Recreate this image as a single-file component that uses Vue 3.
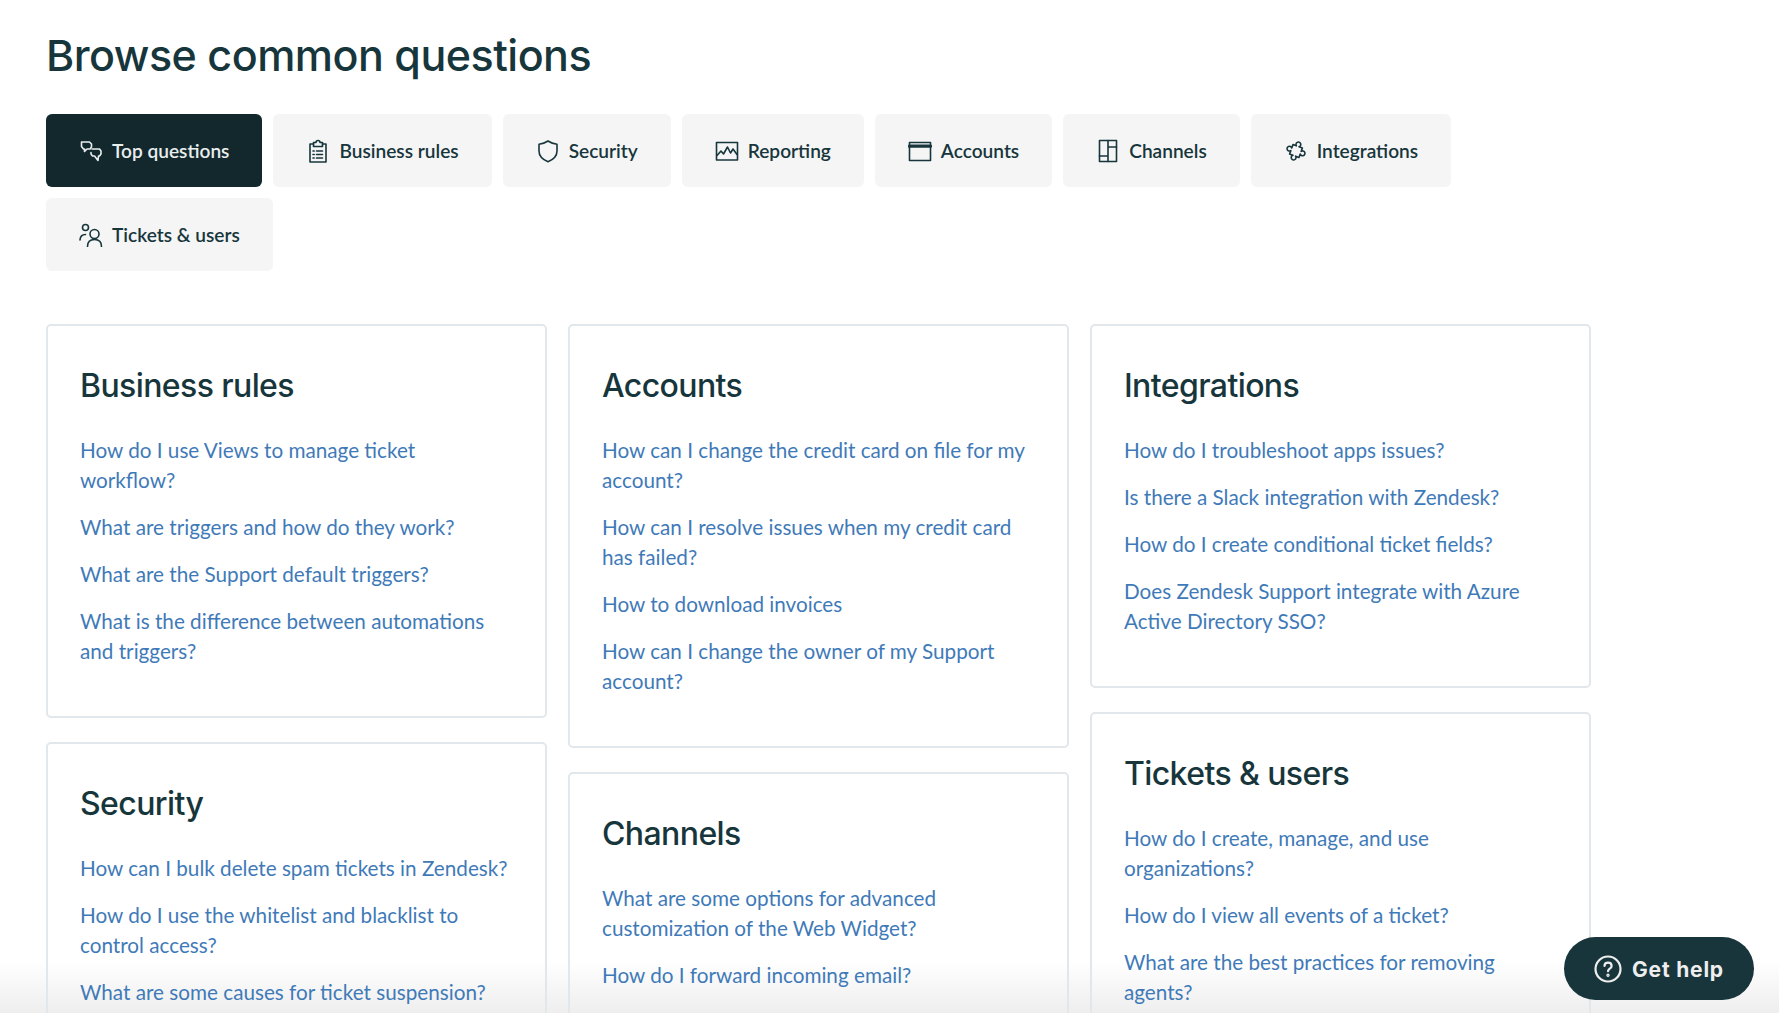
<script setup>
const tabs = [
  { label: 'Top questions', icon: ['M2.500 3h8l2 2v3l-1.500 2H8L5.500 12.500V10H4.500L2.500 7.500z', 'M13 10h7.500l1.500 2v3l-1.500 2h-1l-.5 4.500-3.500-4.500h-2L12 15v-1.500'], active: true },
  { label: 'Business rules', icon: ['M7.500 5H4v18h16V5h-3.500', 'M7.500 7.500V3.500h2.500a2 2 0 0 1 4 0h2.500v4z', 'M10.500 12h6M10.500 15.500h6M10.500 19h6', 'M7 12h1.200M7 15.500h1.200M7 19h1.200'] },
  { label: 'Security', icon: ['M12 2c2.600 1.800 5.600 2.800 9 3.200V12c0 5-3.600 8.500-9 10.800C6.600 20.500 3 17 3 12V5.200C6.400 4.800 9.400 3.800 12 2z'] },
  { label: 'Reporting', icon: ['M1.500 3.500h21v17.500h-21z', 'M2 16.500l4-4.500 2.500 3 4-7 3 6 2.500-4 4 5.500'] },
  { label: 'Accounts', icon: ['M1.500 3.500h21v18h-21z', 'M1.500 7.200h21'], thick: true },
  { label: 'Channels', icon: ['M3.500 1.500h17v21h-17z', 'M12 1.500v21M12 8h8.500M3.500 17H12'] },
  { label: 'Integrations', icon: ['M7 7h3.600a2.400 2.400 0 1 1 2.800 0H17v3.600a2.400 2.400 0 1 1 0 2.800V17h-3.600a2.400 2.400 0 1 1-2.800 0H7v-3.600a2.400 2.400 0 1 1 0-2.800z'], turn: 'rotate(20 12 12)' },
  { label: 'Tickets & users', icon: ['M9.500 4.500a3 3 0 1 0-6 0 3 3 0 1 0 6 0z', 'M20 11a4.500 4.500 0 1 0-9 0 4.500 4.500 0 1 0 9 0z', 'M1 17c.2-3.200 2.300-5.500 5.500-5.500', 'M8.500 23.500c0-4.500 2.800-7 7-7s7 2.500 7 7'] }
]

const columns = [
  [
    { title: 'Business rules', links: ['How do I use Views to manage ticket workflow?', 'What are triggers and how do they work?', 'What are the Support default triggers?', 'What is the difference between automations and triggers?'] },
    { title: 'Security', links: ['How can I bulk delete spam tickets in Zendesk?', 'How do I use the whitelist and blacklist to control access?', 'What are some causes for ticket suspension?'] }
  ],
  [
    { title: 'Accounts', links: ['How can I change the credit card on file for my account?', 'How can I resolve issues when my credit card has failed?', 'How to download invoices', 'How can I change the owner of my Support account?'] },
    { title: 'Channels', links: ['What are some options for advanced customization of the Web Widget?', 'How do I forward incoming email?'] }
  ],
  [
    { title: 'Integrations', links: ['How do I troubleshoot apps issues?', 'Is there a Slack integration with Zendesk?', 'How do I create conditional ticket fields?', 'Does Zendesk Support integrate with Azure Active Directory SSO?'] },
    { title: 'Tickets & users', links: ['How do I create, manage, and use organizations?', 'How do I view all events of a ticket?', 'What are the best practices for removing agents?'] }
  ]
]
</script>

<template>
  <div class="viewport">
    <div class="fade"></div>
    <main class="page">
      <h1 class="title">Browse common questions</h1>
      <nav class="tabs">
        <button v-for="tab in tabs" :key="tab.label" class="tab" :class="{ active: tab.active }">
          <svg class="tab-icon" viewBox="0 0 24 24" fill="none" stroke="currentColor" stroke-linejoin="round" stroke-linecap="round">
            <path v-for="(d, i) in tab.icon" :key="i" :d="d" :transform="tab.turn" :stroke-width="tab.thick && i === 1 ? 3.200 : 1.600" />
          </svg>
          <span>{{ tab.label }}</span>
        </button>
      </nav>
      <section class="columns">
        <div v-for="(col, c) in columns" :key="c" class="column">
          <article v-for="card in col" :key="card.title" class="card">
            <h2 class="card-title">{{ card.title }}</h2>
            <ul class="links">
              <li v-for="link in card.links" :key="link"><a>{{ link }}</a></li>
            </ul>
          </article>
        </div>
      </section>
    </main>
    <button class="help">
      <svg class="help-icon" viewBox="0 0 28 28" fill="none" stroke="currentColor" stroke-width="2.200" stroke-linecap="round">
        <circle cx="14" cy="14" r="12.500" />
        <path d="M10.500 11c0-2 1.600-3.300 3.600-3.300s3.500 1.300 3.500 3.200c0 2.800-3.600 2.700-3.600 5.300" />
        <circle cx="14" cy="20.300" r=".6" fill="currentColor" />
      </svg>
      <span class="help-label">Get help</span>
    </button>
  </div>
</template>

<style>
html, body { margin: 0; background: #fff; }
</style>

<style scoped>
.viewport { position: relative; height: 1013px; overflow: hidden; background: #fff; }
.page { position: relative; padding: 26px 0 0 46px; width: 1545px; font-family: "Lato", "Liberation Sans", sans-serif; }
.title { margin: 0; font-family: "Inter", sans-serif; font-size: 43px; line-height: 58px; font-weight: 500; letter-spacing: -0.5px; color: #17363c; }
.tabs { display: flex; flex-wrap: wrap; gap: 11px; margin-top: 30px; width: 1420px; }
.tab { display: flex; align-items: center; gap: 9px; height: 73px; padding: 0 33px; border: 0; border-radius: 6px; background: #f5f5f5; color: #17363c; font-family: "Lato", sans-serif; font-size: 19.100px; font-weight: 600; }
.tab.active { background: #12282d; color: #e9eeee; }
.tab-icon { width: 24px; height: 24px; flex: none; }
.columns { display: flex; gap: 21px; margin-top: 53px; align-items: flex-start; }
.column { display: flex; flex-direction: column; gap: 24px; width: 501px; }
.card { border: 2px solid #e1e7ea; border-radius: 5px; padding: 32px 32px 33px 32px; }
.card-title { margin: 2px 0 23px; font-family: "Inter", sans-serif; font-size: 32px; line-height: 52px; font-weight: 500; letter-spacing: -0.6px; color: #17363c; }
.links { list-style: none; margin: 0; padding: 0; }
.links li { margin-bottom: 17px; font-size: 20.700px; line-height: 30px; color: #3f7ab8; }
.fade { position: absolute; left: 0; right: 0; bottom: 0; height: 52px; background: linear-gradient(to bottom, #fff, #eee); }
.help { position: absolute; left: 1564px; top: 937px; width: 190px; height: 63px; border: 0; border-radius: 32px; background: #17353b; color: #eee; display: flex; align-items: center; justify-content: center; gap: 10px; font-family: "Inter", sans-serif; font-size: 21px; font-weight: 700; letter-spacing: .8px; }
.help-icon { width: 28px; height: 28px; }
.help-label { padding-top: 1px; }
</style>
